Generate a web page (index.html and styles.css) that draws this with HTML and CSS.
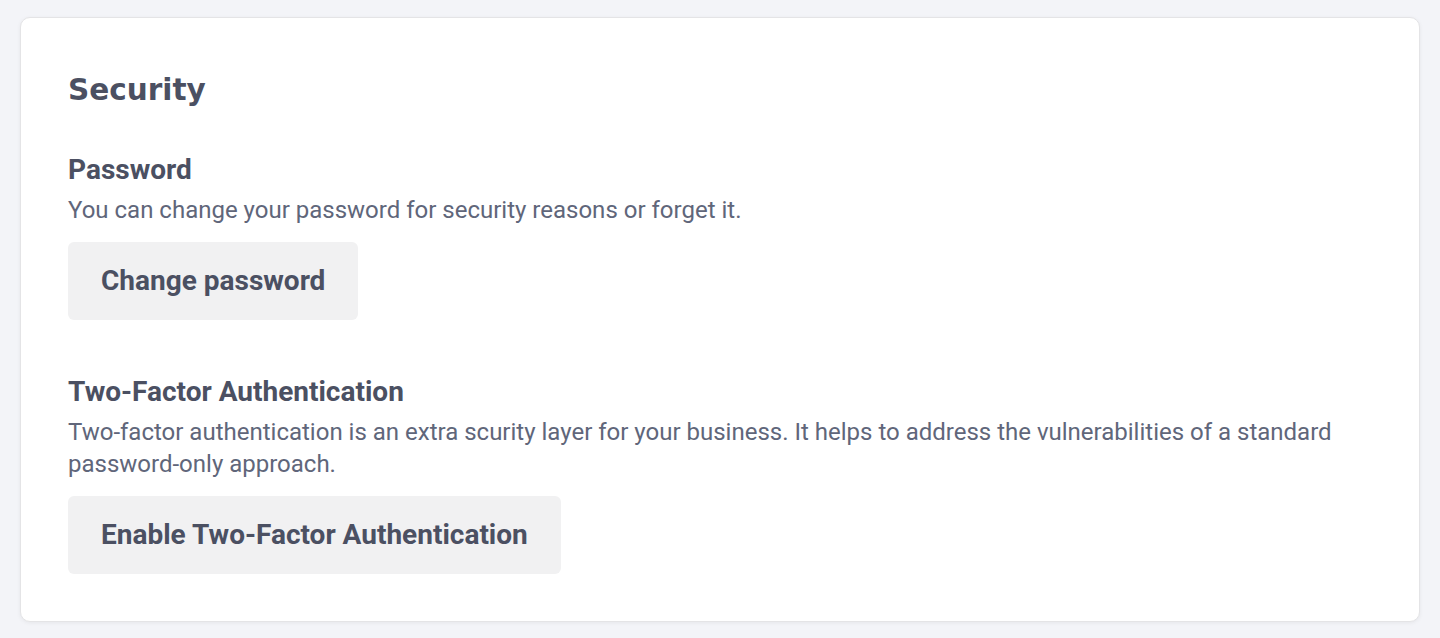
FILE: index.html
```html
<!DOCTYPE html>
<html lang="en">
<head>
<meta charset="utf-8">
<title>Security</title>
<link rel="stylesheet" href="styles.css">
</head>
<body>
<main class="page">
  <section class="card">
    <h1 class="card-title">Security</h1>
    <div class="block">
      <h2 class="block-title">Password</h2>
      <p class="block-text">You can change your password for security reasons or forget it.</p>
      <button class="btn" type="button">Change password</button>
    </div>
    <div class="block">
      <h2 class="block-title">Two-Factor Authentication</h2>
      <p class="block-text">Two-factor authentication is an extra scurity layer for your business. It helps to address the vulnerabilities of a standard password-only approach.</p>
      <button class="btn" type="button">Enable Two-Factor Authentication</button>
    </div>
  </section>
</main>
</body>
</html>
```

FILE: styles.css
```css
* { box-sizing: border-box; }

html, body {
  margin: 0;
  padding: 0;
  background: #f3f4f8;
}

.page {
  padding: 17px 20px 16px;
}

.card {
  background: #ffffff;
  border: 1px solid #e4e4e6;
  border-radius: 10px;
  box-shadow: 0 1px 4px rgba(0, 0, 0, 0.06);
  padding: 52px 47px 46px;
  display: flex;
  flex-direction: column;
  gap: 56px;
  min-height: 605px;
}

.card-title {
  margin: 0 0 -12px;
  font-family: "DejaVu Sans", "Open Sans", sans-serif;
  font-weight: 700;
  font-size: 29.5px;
  line-height: 40px;
  color: #4b5062;
}

.block {
  display: flex;
  flex-direction: column;
  align-items: flex-start;
}

.block-title {
  margin: 0 0 8px;
  font-family: Roboto, "Liberation Sans", sans-serif;
  font-weight: 700;
  font-size: 28px;
  line-height: 32px;
  color: #4b5062;
}

.block-text {
  margin: 0 0 16px;
  font-family: Roboto, "Liberation Sans", sans-serif;
  font-weight: 400;
  font-size: 24px;
  line-height: 32px;
  color: #60667a;
}

.btn {
  border: 0;
  border-radius: 6px;
  background: #f1f1f2;
  padding: 23px 33px;
  font-family: Roboto, "Liberation Sans", sans-serif;
  font-weight: 700;
  font-size: 28px;
  line-height: 32px;
  color: #4b5062;
  cursor: pointer;
}
```
